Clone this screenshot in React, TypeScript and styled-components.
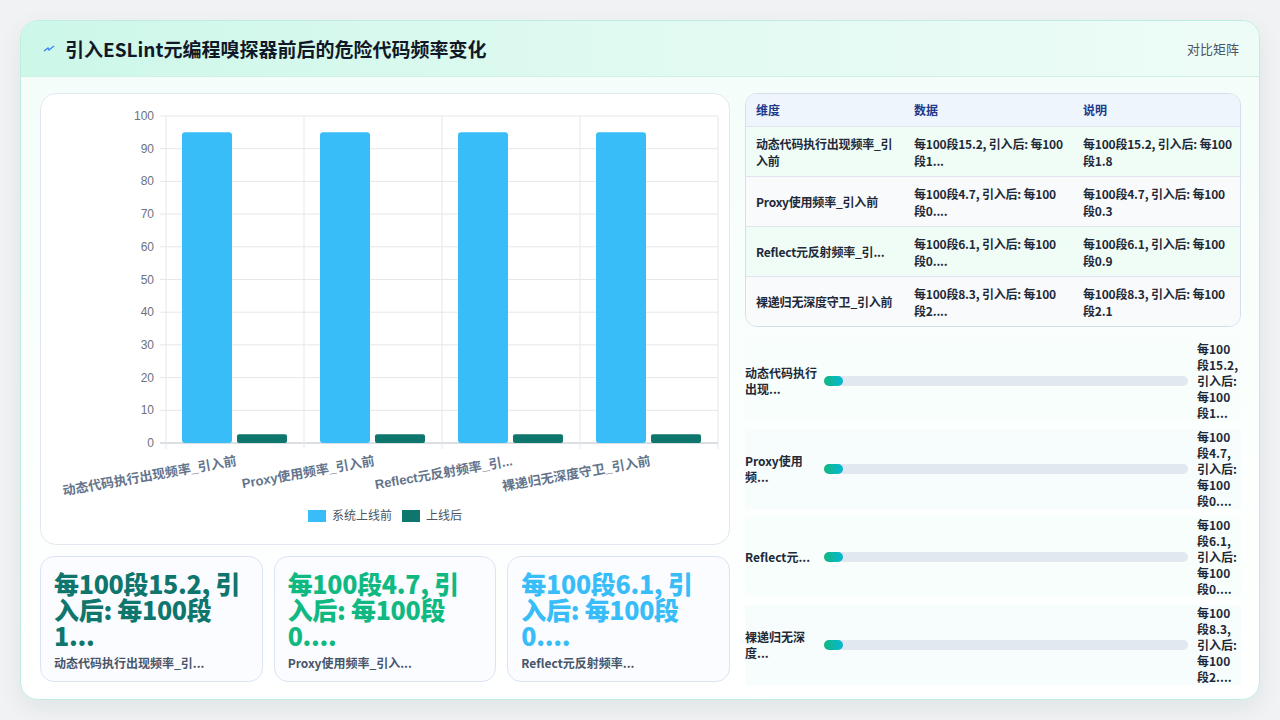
import React from "react";
import styled, { createGlobalStyle } from "styled-components";

const Global = createGlobalStyle`
  html, body { margin: 0; padding: 0; background: #f1f2f4; }
  body { font-family: "Noto Sans CJK SC", "Noto Sans", sans-serif; }
  * { box-sizing: border-box; }
`;

const Page = styled.div`
  width: 1280px; height: 720px; padding: 20px; overflow: hidden;
`;
const Card = styled.div`
  width: 1240px; height: 680px; border-radius: 18px; border: 1px solid #bfeee0;
  background: linear-gradient(180deg, #f3fdf9 0%, #fbfffe 60%, #ffffff 100%);
  box-shadow: 0 8px 24px rgba(15, 80, 70, 0.08); overflow: hidden;
  display: flex; flex-direction: column;
`;
const Header = styled.div`
  height: 56px; flex: none; display: flex; align-items: center; justify-content: space-between;
  padding: 0 20px 0 22px; border-bottom: 1px solid #cdf1e4;
  background: linear-gradient(90deg, #ccf7e9 0%, #e2faf2 55%, #eefcf7 100%);
`;
const Title = styled.h1`
  margin: 0; font-size: 19px; font-weight: 700; color: #111827; display: flex; align-items: center; gap: 10px;
`;
const HeaderLink = styled.span`font-size: 13px; color: #4b5563;`;
const Body = styled.div`
  flex: 1; min-height: 0; display: flex; gap: 15px; padding: 16px 18px 0 19px;
`;
const LeftCol = styled.div`width: 690px; flex: none; display: flex; flex-direction: column; gap: 11px;`;
const RightCol = styled.div`flex: 1; min-width: 0; overflow: hidden; display: flex; flex-direction: column; gap: 14px;`;
const BarList = styled.div`display: flex; flex-direction: column; gap: 8px;`;
const ChartCard = styled.div`
  height: 452px; background: #fff; border: 1px solid #e2e8f0; border-radius: 16px; overflow: hidden;
`;
const KpiRow = styled.div`display: grid; grid-template-columns: repeat(3, 1fr); gap: 11px;`;
const Kpi = styled.div`
  height: 126px; border: 1px solid #dbe4f3; border-radius: 14px; background: #fbfcff; padding: 10px 13px;
  display: flex; flex-direction: column; justify-content: flex-end; overflow: hidden;
`;
const KpiValue = styled.div<{ $c: string }>`
  font-size: 25px; font-weight: 800; line-height: 26px; color: ${p => p.$c}; letter-spacing: -0.3px;
`;
const KpiLabel = styled.div`font-size: 12px; font-weight: 600; color: #475569; margin-top: 6px;`;
const Table = styled.div`
  border: 1px solid #d6deea; border-radius: 12px; overflow: hidden; flex: none;
`;
const TRow = styled.div<{ $bg: string }>`
  display: grid; grid-template-columns: 158px 169px 1fr; background: ${p => p.$bg};
  border-top: 1px solid #dfe6ef; &:first-child { border-top: none; }
`;
const Th = styled.div`padding: 7px 10px; font-size: 12px; font-weight: 700; color: #1e3a8a; height: 32px;`;
const Td = styled.div`
  padding: 0 8px 0 10px; font-size: 12px; font-weight: 600; color: #1f2937; line-height: 17px; height: 49px;
  display: flex; align-items: center; letter-spacing: -0.2px;
`;
const BarRow = styled.div<{ $bg: string }>`
  display: grid; grid-template-columns: 79px 1fr 44px; align-items: center; background: ${p => p.$bg};
  flex: none;
`;
const BarLabel = styled.div`font-size: 12px; font-weight: 600; color: #1f2937; line-height: 16px; padding-right: 4px;`;
const Track = styled.div`height: 10px; border-radius: 5px; background: #e2e8f0; margin-right: 9px;`;
const Fill = styled.div`height: 10px; border-radius: 5px; background: linear-gradient(90deg, #10b981, #06b6d4); width: 19px;`;
const BarVal = styled.div`font-size: 12px; font-weight: 700; color: #1f2937; line-height: 16px; padding-right: 2px;`;

const cats = ["动态代码执行出现频率_引入前", "Proxy使用频率_引入前", "Reflect元反射频率_引...", "裸递归无深度守卫_引入前"];

function Chart() {
  const x0 = 125, x1 = 677, yTop = 22, yBot = 349;
  const cw = (x1 - x0) / 4;
  const y = (v: number) => yBot - (v / 100) * (yBot - yTop);
  return (
    <svg width="690" height="452" style={{ display: "block" }} fontFamily="'Liberation Sans', 'Noto Sans CJK SC', sans-serif">
      {Array.from({ length: 11 }, (_, i) => i * 10).map(v => (
        <g key={v}>
          <line x1={x0 - 6} x2={x1} y1={y(v)} y2={y(v)} stroke={v === 0 ? "#b8bec8" : "#e5e7eb"} />
          <text x={x0 - 12} y={y(v) + 4} fontSize="12" fill="#6b7280" textAnchor="end">{v}</text>
        </g>
      ))}
      {[0, 1, 2, 3, 4].map(i => (
        <line key={i} x1={x0 + i * cw} x2={x0 + i * cw} y1={yTop} y2={yBot + 6} stroke="#e5e7eb" />
      ))}
      {cats.map((c, i) => {
        const cx = x0 + i * cw;
        return (
          <g key={c}>
            <rect x={cx + 16} y={y(95)} width={50} height={yBot - y(95)} rx={3} fill="#38bdf8" />
            <rect x={cx + 71} y={y(2.7)} width={50} height={yBot - y(2.7)} rx={2} fill="#0f766e" />
            <text transform={`translate(${cx + cw / 2 + 2},${yBot + 22}) rotate(-10)`} textAnchor="end" fontSize="13" fill="#64748b" fontWeight="600">{c}</text>
          </g>
        );
      })}
      <rect x={267} y={416} width={18} height={12} fill="#38bdf8" />
      <text x={291} y={426} fontSize="12" fill="#4b5563">系统上线前</text>
      <rect x={361} y={416} width={18} height={12} fill="#0f766e" />
      <text x={385} y={426} fontSize="12" fill="#4b5563">上线后</text>
    </svg>
  );
}

const rows = [
  ["动态代码执行出现频率_引入前", "每100段15.2, 引入后: 每100段1...", "每100段15.2, 引入后: 每100段1.8"],
  ["Proxy使用频率_引入前", "每100段4.7, 引入后: 每100段0....", "每100段4.7, 引入后: 每100段0.3"],
  ["Reflect元反射频率_引...", "每100段6.1, 引入后: 每100段0....", "每100段6.1, 引入后: 每100段0.9"],
  ["裸递归无深度守卫_引入前", "每100段8.3, 引入后: 每100段2....", "每100段8.3, 引入后: 每100段2.1"],
];
const bars = [
  ["动态代码执行出现...", "每100段15.2, 引入后: 每100段1..."],
  ["Proxy使用频...", "每100段4.7, 引入后: 每100段0...."],
  ["Reflect元...", "每100段6.1, 引入后: 每100段0...."],
  ["裸递归无深度...", "每100段8.3, 引入后: 每100段2...."],
];

export default function App() {
  return (
    <Page>
      <Global />
      <Card>
        <Header>
          <Title>
            <svg width="12" height="10" viewBox="0 0 12 10"><path d="M1 7 L5 4 L6 6 L11 2" stroke="#3b82f6" strokeWidth="1.4" fill="none" /></svg>
            引入ESLint元编程嗅探器前后的危险代码频率变化
          </Title>
          <HeaderLink>对比矩阵</HeaderLink>
        </Header>
        <Body>
          <LeftCol>
            <ChartCard><Chart /></ChartCard>
            <KpiRow>
              <Kpi><KpiValue $c="#0f766e">每100段15.2, 引入后: 每100段1...</KpiValue><KpiLabel>动态代码执行出现频率_引...</KpiLabel></Kpi>
              <Kpi><KpiValue $c="#10b981">每100段4.7, 引入后: 每100段0....</KpiValue><KpiLabel>Proxy使用频率_引入...</KpiLabel></Kpi>
              <Kpi><KpiValue $c="#38bdf8">每100段6.1, 引入后: 每100段0....</KpiValue><KpiLabel>Reflect元反射频率...</KpiLabel></Kpi>
            </KpiRow>
          </LeftCol>
          <RightCol>
            <Table>
              <TRow $bg="#eef5fd"><Th>维度</Th><Th>数据</Th><Th>说明</Th></TRow>
              {rows.map((r, i) => (
                <TRow key={i} $bg={i % 2 === 0 ? "#f0fdf7" : "#f8fafc"}>
                  <Td>{r[0]}</Td><Td>{r[1]}</Td><Td>{r[2]}</Td>
                </TRow>
              ))}
            </Table>
            <BarList>
              {bars.map((b, i) => (
                <BarRow key={i} $bg={i % 2 === 0 ? "#f7fefc" : "#f7fcfc"}>
                  <BarLabel>{b[0]}</BarLabel>
                  <Track><Fill /></Track>
                  <BarVal>{b[1]}</BarVal>
                </BarRow>
              ))}
            </BarList>
          </RightCol>
        </Body>
      </Card>
    </Page>
  );
}
